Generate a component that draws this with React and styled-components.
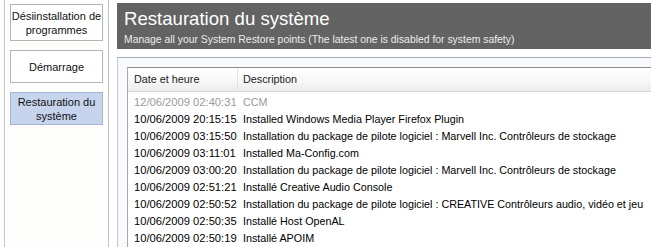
import React from 'react'
import styled, { createGlobalStyle } from 'styled-components'

const GlobalStyle = createGlobalStyle`
  html, body {
    margin: 0;
    padding: 0;
    background: #ffffff;
    overflow: hidden;
  }
  body {
    font-family: 'Liberation Sans', Arial, sans-serif;
    font-size: 11px;
    color: #000;
  }
`

const Page = styled('div')`
    display: flex;
    flex-flow: row nowrap;
    height: 247px;
    padding-left: 4px;
`

const Sidebar = styled('nav')`
    width: 105px;
    flex: 0 0 auto;
    border-left: 1px solid #c4c4c4;
    border-right: 1px solid #c4c4c4;
    background: #fdfdfb;
    display: flex;
    flex-flow: column nowrap;
    gap: 9px;
    padding: 4px 5px 0;
    box-sizing: border-box;
`

const NavButton = styled('div')`
    height: ${p => p.tall ? 37 : 33}px;
    box-sizing: border-box;
    display: flex;
    align-items: center;
    justify-content: center;
    text-align: center;
    white-space: nowrap;
    line-height: 14px;
    font-size: 11px;
    color: #111;
    background: ${p => p.active ? '#c6d4ee' : '#ffffff'};
    border: 1px solid ${p => p.active ? '#a4b4d2' : '#b4b4b4'};
`

const Main = styled('main')`
    flex: 1 1 auto;
    margin-left: 8px;
    display: flex;
    flex-flow: column nowrap;
    min-width: 0;
`

const Header = styled('header')`
    margin-top: 3px;
    height: 46px;
    background: #636363;
    padding: 3px 0 0 7px;
    box-sizing: border-box;
    color: #fff;

    h1 {
        margin: 0;
        font-size: 18.6px;
        font-weight: normal;
        line-height: 26px;
    }

    p {
        margin: 0;
        font-size: 10.4px;
        line-height: 15px;
        color: #ececec;
    }
`

const Panel = styled('section')`
    margin-top: 8px;
    flex: 1 1 auto;
    border-top: 1px solid #a7adb4;
    border-left: 1px solid #c4c8cc;
    background: #f7f9fc;
    padding: 9px 0 0 9px;
`

const List = styled('div')`
    border-top: 1px solid #8e8e8e;
    border-left: 1px solid #a8a8a8;
    background: #fff;
    height: 100%;
`

const Columns = styled('div')`
    display: grid;
    grid-template-columns: 109px 1fr;
    white-space: nowrap;
`

const HeadRow = styled(Columns)`
    height: 23px;
    align-items: center;
    background: linear-gradient(#ffffff 0%, #f7f7f7 60%, #ececec 100%);
    border-bottom: 1px solid #d5d5d5;
    margin-bottom: 2px;
    color: #222;
    font-size: 10.8px;

    span {
        padding-left: 6px;
        line-height: 23px;
    }

    span + span {
        border-left: 1px solid #e4e4e4;
        padding-left: 5px;
    }
`

const Row = styled(Columns)`
    height: 17px;
    line-height: 17px;
    color: ${p => p.muted ? '#9a9a9a' : '#000'};

    span {
        padding-left: 6px;
        font-size: 11.2px;
    }

    span + span {
        font-size: 10.75px;
    }
`

const points = [
    ['12/06/2009 02:40:31', 'CCM', true],
    ['10/06/2009 20:15:15', 'Installed Windows Media Player Firefox Plugin'],
    ['10/06/2009 03:15:50', 'Installation du package de pilote logiciel : Marvell Inc. Contrôleurs de stockage'],
    ['10/06/2009 03:11:01', 'Installed Ma-Config.com'],
    ['10/06/2009 03:00:20', 'Installation du package de pilote logiciel : Marvell Inc. Contrôleurs de stockage'],
    ['10/06/2009 02:51:21', 'Installé Creative Audio Console'],
    ['10/06/2009 02:50:52', 'Installation du package de pilote logiciel : CREATIVE Contrôleurs audio, vidéo et jeu'],
    ['10/06/2009 02:50:35', 'Installé Host OpenAL'],
    ['10/06/2009 02:50:19', 'Installé APOIM'],
]

const App = () => {
    return (
        <>
            <GlobalStyle />
            <Page>
                <Sidebar>
                    <NavButton tall>Désiinstallation de<br />programmes</NavButton>
                    <NavButton>Démarrage</NavButton>
                    <NavButton active>Restauration du<br />système</NavButton>
                </Sidebar>
                <Main>
                    <Header>
                        <h1>Restauration du système</h1>
                        <p>Manage all your System Restore points (The latest one is disabled for system safety)</p>
                    </Header>
                    <Panel>
                        <List>
                            <HeadRow>
                                <span>Date et heure</span>
                                <span>Description</span>
                            </HeadRow>
                            {points.map(([date, desc, muted]) => (
                                <Row key={date} muted={muted}>
                                    <span>{date}</span>
                                    <span>{desc}</span>
                                </Row>
                            ))}
                        </List>
                    </Panel>
                </Main>
            </Page>
        </>
    );
}

export default App;
